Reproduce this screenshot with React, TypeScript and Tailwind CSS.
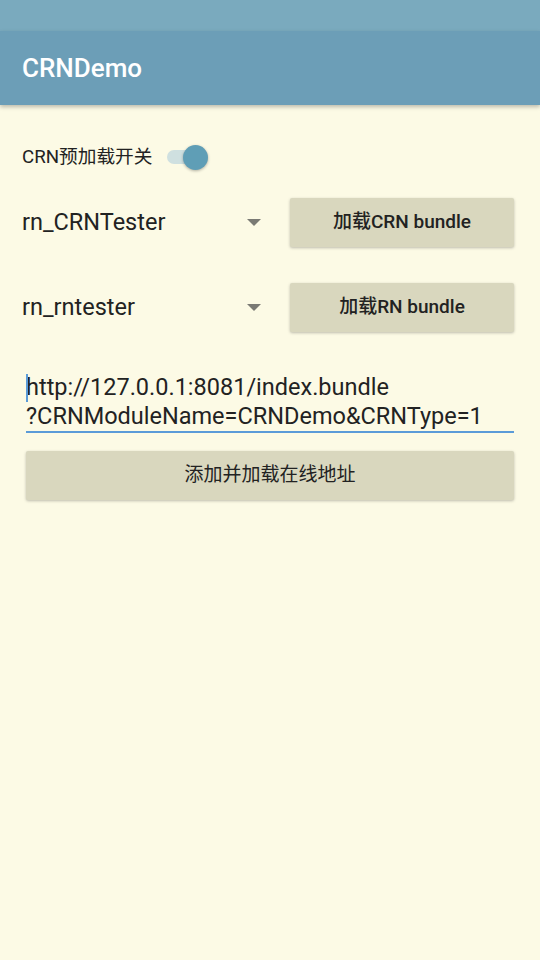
import React from 'react';

const latin = { fontFamily: 'Roboto, "Noto Sans CJK SC", sans-serif' };

const Picker = ({ label }: { label: string }) => (
  <div className="flex items-center w-[248px] pr-[9px] justify-between">
    <span className="text-[23.5px] text-[#222]">{label}</span>
    <svg width="14" height="8" viewBox="0 0 14 8">
      <path d="M0 0 L14 0 L7 7 Z" fill="#7a7a74" />
    </svg>
  </div>
);

const Button = ({ text, className }: { text: string; className?: string }) => (
  <div className={`h-[49px] bg-[#d9d7be] rounded-[2px] shadow-[0_1px_3px_rgba(0,0,0,0.25)] flex items-center justify-center text-[19px] text-[#222] ${className ?? ''}`}>
    {text}
  </div>
);

export default function App() {
  return (
    <div className="w-[540px] h-[960px] bg-[#fcfae5] flex flex-col" style={latin}>
      <div className="h-[31px] bg-[#7aaabe]" />
      <div className="h-[74px] bg-[#6c9eb7] flex items-center pl-[22px] shadow-[0_2px_4px_rgba(0,0,0,0.25)]">
        <span className="text-white text-[26px] font-medium">CRNDemo</span>
      </div>

      <div className="flex items-center pl-[22px] mt-[40px] h-[24px]">
        <span className="text-[18.7px] text-[#222]">CRN预加载开关</span>
        <div className="relative ml-[15px] w-[41px] h-[24px] flex items-center">
          <div className="w-[34px] h-[14px] rounded-full bg-[#cfe0e0]" />
          <div className="absolute right-0 w-[25px] h-[25px] rounded-full bg-[#5f9eb6] shadow-[0_1px_3px_rgba(0,0,0,0.3)]" />
        </div>
      </div>

      <div className="flex items-center pl-[22px] pr-[26px] mt-[29px] justify-between">
        <Picker label="rn_CRNTester" />
        <Button text="加载CRN bundle" className="w-[224px] font-medium" />
      </div>

      <div className="flex items-center pl-[22px] pr-[26px] mt-[36px] justify-between">
        <Picker label="rn_rntester" />
        <Button text="加载RN bundle" className="w-[224px] font-medium" />
      </div>

      <div className="mx-[26px] mt-[41px] relative border-b-2 border-[#5b9bd8]">
        <div className="absolute left-0 top-[1px] w-[2px] h-[28px] bg-[#5b9bd8]" />
        <div className="text-[23.5px] leading-[29px] text-[#222]">
          http://127.0.0.1:8081/index.bundle
          <br />
          ?CRNModuleName=CRNDemo&amp;CRNType=1
        </div>
      </div>

      <Button text="添加并加载在线地址" className="mx-[26px] mt-[18px] text-[18.5px]" />
    </div>
  );
}
